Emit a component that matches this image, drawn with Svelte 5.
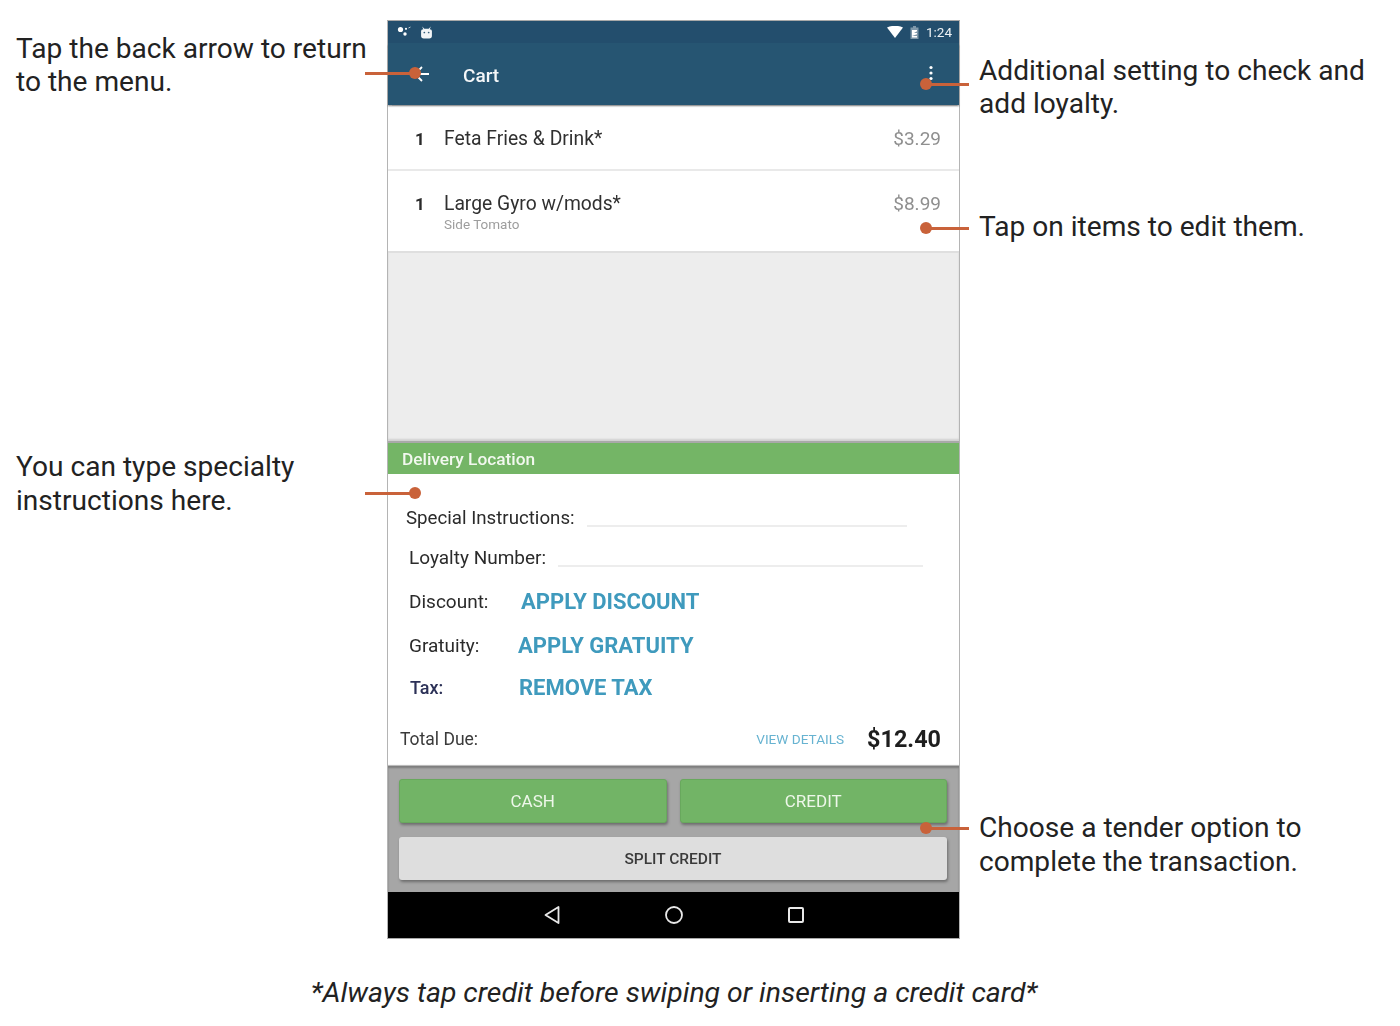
<script>
  const items = [
    { qty: 1, name: 'Feta Fries & Drink*', price: '$3.29' },
    { qty: 1, name: 'Large Gyro w/mods*', mods: 'Side Tomato', price: '$8.99' }
  ]
  const adjustments = [
    { label: 'Discount:', action: 'APPLY DISCOUNT', cls: 'discount' },
    { label: 'Gratuity:', action: 'APPLY GRATUITY', cls: 'gratuity' },
    { label: 'Tax:', action: 'REMOVE TAX', cls: 'tax' }
  ]
</script>

<div class="stage">
  <aside class="notes left">
    <p class="note back-note">Tap the back arrow to return<br />to the menu.</p>
    <p class="note type-note">You can type specialty<br />instructions here.</p>
  </aside>

  <div class="phone">
    <div class="status">
      <div class="status-left">
        <svg width="16" height="12" viewBox="0 0 16 12"><circle cx="3.5" cy="3.5" r="2.6" fill="#fff" /><circle cx="9" cy="2.8" r="1.1" fill="#fff" /><circle cx="8" cy="8" r="1.7" fill="#fff" /><path d="M11.5 2l2-1" stroke="#fff" stroke-width="0.7" /></svg>
        <svg width="13" height="13" viewBox="0 0 12 12"><path d="M1 4.5Q1 3 3 3L2 .5 4 2.6h4L10 .5 9 3q2 0 2 1.5V9q0 2.5-2.5 2.5h-5Q1 11.500 1 9z" fill="#f2f5f7" /><circle cx="4" cy="6" r=".8" fill="#35607c" /><circle cx="8" cy="6" r=".8" fill="#35607c" /></svg>
      </div>
      <div class="status-right">
        <svg width="16" height="12" viewBox="0 0 16 12"><path d="M0 1.500Q8-2 16 1.500L8 12z" fill="#fff" /></svg>
        <svg width="9" height="13" viewBox="0 0 9 13"><path d="M3 0h3v1.500h2.500V13H.5V1.500H3z" fill="#7f98aa" /><path d="M2 4h5v1.200L4 7h3v1.200L2 10h5v1.500H2z" fill="#fff" /></svg>
        <span>1:24</span>
      </div>
    </div>
    <header class="toolbar">
      <svg class="back" width="24" height="24" viewBox="0 0 24 24"><path d="M6 12h16M15 5l-7 7 7 7" fill="none" stroke="#fff" stroke-width="1.800" /></svg>
      <span class="title">Cart</span>
      <svg class="more" width="6" height="16" viewBox="0 0 6 16"><circle cx="3" cy="2.500" r="1.600" fill="#fff" /><circle cx="3" cy="8" r="1.600" fill="#fff" /><circle cx="3" cy="13.500" r="1.600" fill="#fff" /></svg>
    </header>

    <ul class="items">
      {#each items as item}
        <li class="item" class:has-mods={item.mods}>
          <span class="qty">{item.qty}</span>
          <div class="item-body">
            <span class="name">{item.name}</span>
            {#if item.mods}<span class="mods">{item.mods}</span>{/if}
          </div>
          <span class="price">{item.price}</span>
        </li>
      {/each}
    </ul>
    <div class="empty"></div>

    <div class="location">Delivery Location</div>
    <section class="form">
      <div class="field special">
        <span>Special Instructions:</span>
        <i class="input"></i>
      </div>
      <div class="field loyalty">
        <span>Loyalty Number:</span>
        <i class="input"></i>
      </div>
      {#each adjustments as row}
        <div class="adjust {row.cls}">
          <span class="adjust-label">{row.label}</span>
          <span class="action">{row.action}</span>
        </div>
      {/each}
    </section>
    <div class="total">
      <span class="total-label">Total Due:</span>
      <span class="details">VIEW DETAILS</span>
      <strong>$12.40</strong>
    </div>

    <div class="tender">
      <div class="tender-row">
        <button class="btn green">CASH</button>
        <button class="btn green">CREDIT</button>
      </div>
      <button class="btn plain">SPLIT CREDIT</button>
    </div>
    <nav class="nav">
      <svg width="20" height="20" viewBox="0 0 20 20"><path d="M16.500 2v16L3.500 10z" fill="none" stroke="#e8e8e8" stroke-width="1.800" stroke-linejoin="round" /></svg>
      <svg width="20" height="20" viewBox="0 0 20 20"><circle cx="10" cy="10" r="8" fill="none" stroke="#e8e8e8" stroke-width="1.800" /></svg>
      <svg width="18" height="18" viewBox="0 0 18 18"><rect x="2" y="2" width="14" height="14" rx="1" fill="none" stroke="#e8e8e8" stroke-width="2" /></svg>
    </nav>
  </div>

  <aside class="notes right">
    <p class="note loyalty-note">Additional setting to check and<br />add loyalty.</p>
    <p class="note edit-note">Tap on items to edit them.</p>
    <p class="note tender-note">Choose a tender option to<br />complete the transaction.</p>
  </aside>

  <!-- callouts sit on top of the phone -->
  <i class="callout from-left" style="top:73px"></i>
  <i class="callout from-left" style="top:493px"></i>
  <i class="callout from-right" style="top:84px"></i>
  <i class="callout from-right" style="top:228px"></i>
  <i class="callout from-right" style="top:828px"></i>
</div>

<p class="caption">*Always tap credit before swiping or inserting a credit card*</p>

<style>
  :global(body) {
    margin: 0;
    background: #fff;
    font-family: Roboto, 'Liberation Sans', sans-serif;
    color: #2a2a2a;
  }

  .stage {
    position: relative;
    display: grid;
    grid-template-columns: 387px 573px 1fr;
    padding-top: 21px;
    width: 1400px;
  }

  .notes {
    display: flex;
    flex-direction: column;
  }

  .note {
    margin: 0;
    font-size: 28.100px;
    line-height: 33.500px;
    color: #222;
    white-space: nowrap;
  }

  .left {
    padding-left: 16px;
  }
  .back-note {
    margin-top: 11px;
    line-height: 33px;
  }
  .type-note {
    margin-top: 352px;
    line-height: 34px;
  }

  .right {
    padding-left: 19px;
  }
  .loyalty-note {
    margin-top: 34px;
    line-height: 32.500px;
  }
  .edit-note {
    margin-top: 90px;
  }
  .tender-note {
    margin-top: 567px;
    line-height: 34px;
  }

  .callout {
    position: absolute;
    height: 2.500px;
    width: 50px;
    margin-top: -1px;
    background: #c9623a;
  }
  .callout::after {
    content: '';
    position: absolute;
    top: -5px;
    width: 12px;
    height: 12px;
    border-radius: 50%;
    background: #c9623a;
  }
  .from-left {
    left: 365px;
  }
  .from-left::after {
    right: -6px;
  }
  .from-right {
    left: 926px;
    width: 43px;
  }
  .from-right::after {
    left: -6px;
  }

  .phone {
    display: flex;
    flex-direction: column;
    height: 917px;
    box-sizing: border-box;
    border: solid #b4b4b4;
    border-width: 0 1.500px;
    background: #fff;
    filter: blur(0.5px);
    box-shadow: 0 -1px 0 #a9a9a9, 0 1px 0 #a9a9a9;
  }

  .status {
    display: flex;
    justify-content: space-between;
    align-items: center;
    height: 22px;
    padding: 0 7px 0 9px;
    background: #234e6d;
    flex: none;
  }
  .status-left,
  .status-right {
    display: flex;
    align-items: center;
  }
  .status-left {
    gap: 7px;
  }
  .status-right {
    gap: 7px;
    color: #eef2f5;
    font-size: 13.500px;
  }

  .toolbar {
    display: flex;
    align-items: center;
    height: 62px;
    flex: none;
    background: #265572;
    color: #f3f6f8;
    box-shadow: 0 1.500px 1.500px rgba(0, 0, 0, 0.4);
    position: relative;
    padding: 0 25px 0 19px;
  }
  .title {
    margin-left: 32px;
    font-size: 19px;
    font-weight: 500;
    flex: 1;
    margin-top: 2px;
  }
  .more {
    margin-top: -2px;
  }

  .items {
    list-style: none;
    margin: 0;
    padding: 0;
    flex: none;
  }
  .item {
    display: flex;
    align-items: flex-start;
    height: 66px;
    box-sizing: border-box;
    padding: 23px 18px 0 27px;
    border-bottom: 2px solid #e9e9e9;
    font-size: 19.300px;
  }
  .item.has-mods {
    height: 82px;
    padding-top: 22px;
    border-bottom-color: #dfdfdf;
  }
  .qty {
    width: 29px;
    font-weight: 700;
    font-size: 17px;
    line-height: 22px;
  }
  .item-body {
    flex: 1;
    display: flex;
    flex-direction: column;
  }
  .name {
    line-height: 22px;
    color: #303030;
  }
  .mods {
    font-size: 13.500px;
    line-height: 18px;
    color: #9d9d9d;
  }
  .price {
    font-size: 19px;
    line-height: 22px;
    color: #8f8f8f;
  }

  .empty {
    flex: none;
    height: 188px;
    background: #ededed;
    box-shadow: inset 0 -2px 2px rgba(0, 0, 0, 0.12);
  }

  .location {
    flex: none;
    height: 31px;
    padding-left: 14px;
    border-top: 2px solid #a9a9a9;
    background: #74b566;
    color: #f2f8ef;
    font-size: 17.300px;
    font-weight: 500;
    line-height: 33px;
  }

  .form {
    flex: none;
    height: 250px;
    box-sizing: border-box;
    padding-top: 31px;
    font-size: 19px;
    color: #2b2b2b;
  }
  .field {
    display: flex;
    align-items: flex-start;
    height: 40px;
  }
  .field.loyalty {
    height: 30px;
  }
  .field span {
    line-height: 26px;
  }
  .special {
    padding-left: 18px;
    font-size: 18.700px;
  }
  .loyalty {
    padding-left: 21px;
  }
  .input {
    display: block;
    height: 2px;
    margin: 20px 0 0 12px;
    background: #ededed;
  }
  .special .input {
    width: 320px;
  }
  .loyalty .input {
    width: 365px;
  }

  .adjust {
    display: flex;
    align-items: center;
    padding-left: 21px;
  }
  .adjust.discount {
    height: 44px;
    margin-top: 4px;
  }
  .adjust.gratuity {
    height: 44px;
  }
  .adjust.tax {
    height: 40px;
    padding-left: 22px;
    color: #2c3157;
  }
  .tax .adjust-label {
    font-size: 18px;
    font-weight: 500;
    width: 109px;
  }
  .discount .adjust-label {
    width: 112px;
  }
  .gratuity .adjust-label {
    width: 109px;
  }
  .action {
    font-size: 22px;
    font-weight: 700;
    color: #3f9abd;
    white-space: nowrap;
  }

  .total {
    display: flex;
    align-items: center;
    flex: none;
    height: 42px;
    box-sizing: border-box;
    padding: 0 18px 13px 12px;
    box-shadow: inset 0 -2px 1px -1px rgba(0, 0, 0, 0.3);
  }
  .total-label {
    flex: 1;
    font-size: 17.500px;
    color: #3a3a3a;
  }
  .details {
    font-size: 13.600px;
    color: #67b3d1;
    margin-right: 23px;
  }
  .total strong {
    font-size: 23.400px;
    font-weight: 700;
    color: #1e1e1e;
  }

  .tender {
    flex: none;
    height: 126px;
    box-sizing: border-box;
    padding: 13px 12px 0 11px;
    background: #a6a6a6;
    box-shadow: inset 0 2px 2px rgba(0, 0, 0, 0.25);
    display: flex;
    flex-direction: column;
    gap: 14px;
  }
  .tender-row {
    display: flex;
    gap: 13px;
  }
  .btn {
    display: block;
    border: 0;
    border-radius: 3px;
    font-family: inherit;
    padding: 0;
    height: 44px;
    box-shadow: 1px 2px 3px rgba(0, 0, 0, 0.35);
  }
  .green {
    flex: 1;
    background: #72b466;
    color: #eef7ea;
    font-size: 17px;
    border: 1px solid #68a85d;
  }
  .plain {
    background: #dedede;
    color: #3a3a3a;
    font-size: 15.500px;
    font-weight: 500;
    width: 100%;
    height: 43px;
  }

  .nav {
    flex: 1;
    background: #000;
    display: grid;
    grid-template-columns: 122px 122px 122px;
    justify-content: center;
    justify-items: center;
    align-items: center;
  }
  .nav svg {
    display: block;
  }

  .caption {
    margin: 38px 0 0;
    text-align: center;
    font-size: 28.400px;
    line-height: 34px;
    font-style: italic;
    color: #222;
    width: 1348px;
  }
</style>
